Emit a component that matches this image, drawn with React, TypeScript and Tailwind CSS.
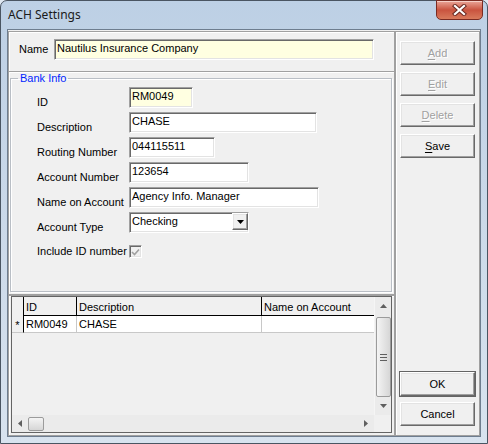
import React from 'react';

const sunken =
  'border border-t-[#a0a0a0] border-l-[#a0a0a0] border-r-white border-b-white shadow-[inset_1px_1px_0_#696969,inset_-1px_-1px_0_#e3e3e3]';
const raised =
  'border border-t-white border-l-white border-r-[#696969] border-b-[#696969] shadow-[inset_-1px_-1px_0_#a0a0a0,inset_1px_1px_0_#e3e3e3] bg-[#f0f0f0]';
const etched = 'border border-[#a0a0a0] shadow-[inset_1px_1px_0_#fff]';

const fields = [
  { label: 'ID', value: 'RM0049', cls: 'w-[64px] bg-[#ffffe1]' },
  { label: 'Description', value: 'CHASE', cls: 'w-[188px] bg-white' },
  { label: 'Routing Number', value: '044115511', cls: 'w-[86px] bg-white' },
  { label: 'Account Number', value: '123654', cls: 'w-[120px] bg-white' },
  { label: 'Name on Account', value: 'Agency Info. Manager', cls: 'w-[190px] bg-white' },
];

// ul = index of the accelerator letter, or -1 for none
function Btn({ label, ul, disabled, def }: { label: string; ul: number; disabled?: boolean; def?: boolean }) {
  return (
    <div
      className={`${raised} h-[24px] w-[75px] flex items-center justify-center text-[11px] ${
        disabled ? 'text-[#a0a0a0] [text-shadow:1px_1px_0_#fff]' : 'text-black'
      } ${def ? 'outline outline-1 outline-[#646464]' : ''}`}
    >
      {ul < 0 ? (
        <span>{label}</span>
      ) : (
        <span>
          {label.slice(0, ul)}
          <span className="underline underline-offset-2">{label.charAt(ul)}</span>
          {label.slice(ul + 1)}
        </span>
      )}
    </div>
  );
}

function Tri({ dir }: { dir: 'up' | 'down' | 'left' | 'right' }) {
  const pts = {
    up: '0,4 7,4 3.5,0',
    down: '0,0 7,0 3.5,4',
    left: '4,0 4,7 0,3.5',
    right: '0,0 0,7 4,3.5',
  }[dir];
  const horiz = dir === 'up' || dir === 'down';
  return (
    <svg width={horiz ? 7 : 4} height={horiz ? 4 : 7} viewBox={horiz ? '0 0 7 4' : '0 0 4 7'}>
      <polygon points={pts} fill="#5f5f5f" />
    </svg>
  );
}

export default function App() {
  return (
    <div className="w-[488px] h-[444px] bg-[#dfe8f2] font-['Liberation_Sans',Arial,sans-serif] text-black">
      <div className="w-[488px] h-[444px] rounded-t-[7px] border border-[#4a5562] bg-linear-to-b from-[#bdd0e5] via-[#cbd9e9] to-[#d8e3ef] flex flex-col">
        {/* title bar */}
        <div className="h-[28px] flex items-start justify-between">
          <div className="pl-[7px] pt-[6px] text-[12px] leading-[16px] text-[#1a1a1a] font-['Noto_Sans','Liberation_Sans',sans-serif]">
            ACH Settings
          </div>
          <div className="mr-[4px] -mt-[1px] w-[47px] h-[20px] rounded-b-[5px] border border-[#7a2b22] bg-linear-to-b from-[#e9a598] via-[#c9533f] to-[#d87a5c] shadow-[inset_0_1px_0_#f6cfc6] flex items-center justify-center">
            <svg width="15" height="12" viewBox="0 0 15 12">
              <path d="M3 2 L12 10 M12 2 L3 10" stroke="#6b2a22" strokeWidth="4.2" strokeLinecap="square" />
              <path d="M3 2 L12 10 M12 2 L3 10" stroke="#ffffff" strokeWidth="2.2" strokeLinecap="square" />
            </svg>
          </div>
        </div>

        {/* client */}
        <div className="mx-[6px] mb-[6px] h-[408px] border border-[#6e7d8f] bg-[#f0f0f0] flex text-[11px] leading-[13px]">
          {/* left column */}
          <div className="w-[387px] pt-[1px] flex flex-col">
            <div className={`${etched} h-[41px] flex items-start`}>
              <span className="pl-[10px] pt-[11px] w-[45px]">Name</span>
              <div className={`${sunken} mt-[7px] w-[320px] h-[21px] bg-[#ffffe1] pl-[2px] leading-[17px]`}>
                Nautilus Insurance Company
              </div>
            </div>

            <div className={`${etched} h-[223px] border-t-0 pl-[1px]`}>
              <fieldset className="w-[382px] h-[220px] border border-[#b9bec5] shadow-[inset_1px_1px_0_#fff,1px_1px_0_#fff] m-0 p-0">
                <legend className="ml-[7px] px-[2px] text-[#0026ff] leading-[13px]">Bank Info</legend>
                <div className="pl-[26px] pt-[2px] flex flex-col gap-[4px]">
                  {fields.map((f) => (
                    <div key={f.label} className="flex items-start h-[21px]">
                      <span className="w-[92px] pt-[9px]">{f.label}</span>
                      <div className={`${sunken} ${f.cls} h-[21px] pl-[2px] leading-[17px]`}>{f.value}</div>
                    </div>
                  ))}
                  <div className="flex items-start h-[21px]">
                    <span className="w-[92px] pt-[9px]">Account Type</span>
                    <div className={`${sunken} w-[120px] h-[21px] bg-white flex items-start justify-between`}>
                      <span className="pl-[2px] leading-[17px]">Checking</span>
                      <div className={`${raised} w-[16px] h-[17px] flex items-center justify-center`}>
                        <svg width="7" height="4" viewBox="0 0 7 4">
                          <polygon points="0,0 7,0 3.5,4" fill="#000" />
                        </svg>
                      </div>
                    </div>
                  </div>
                  <div className="flex items-center h-[13px] mt-[8px]">
                    <span className="w-[92px]">Include ID number</span>
                    <div className={`${sunken} w-[13px] h-[13px] bg-[#f0f0f0] flex items-center justify-center`}>
                      <svg width="9" height="8" viewBox="0 0 9 8">
                        <path d="M1 4 L3.5 6.5 L8 1.5" stroke="#a0a0a0" strokeWidth="1.6" fill="none" />
                      </svg>
                    </div>
                  </div>
                </div>
              </fieldset>
            </div>

            {/* grid panel */}
            <div className={`${etched} h-[141px] px-[2px] pb-[2px]`}>
              <div className="h-[137px] border border-[#646464] flex flex-col bg-[#f0f0f0]">
                <div className="flex h-[118px]">
                  <div className="flex-1 flex flex-col">
                    {/* header */}
                    <div className="flex h-[19px]">
                      <div className="w-[12px] border-r border-black" />
                      <div className="w-[53px] border-r border-b border-black pl-[2px] pt-[4px]">ID</div>
                      <div className="w-[185px] border-r border-b border-black pl-[2px] pt-[4px]">Description</div>
                      <div className="flex-1 border-b border-black pl-[2px] pt-[4px]">Name on Account</div>
                    </div>
                    {/* row */}
                    <div className="flex h-[17px]">
                      <div className="w-[12px] border-r border-b border-r-black border-b-[#c8c8c8] text-center leading-[18px]">*</div>
                      <div className="w-[53px] border-r border-b border-[#c8c8c8] bg-white pl-[2px] pt-[2px]">RM0049</div>
                      <div className="w-[185px] border-r border-b border-[#c8c8c8] bg-white pl-[2px] pt-[2px]">CHASE</div>
                      <div className="flex-1 border-b border-[#c8c8c8] bg-white" />
                    </div>
                  </div>
                  {/* vertical scrollbar */}
                  <div className="w-[17px] bg-[#ebebeb] border-l border-[#f5f5f5] flex flex-col items-center">
                    <div className="h-[17px] flex items-center justify-center">
                      <Tri dir="up" />
                    </div>
                    <div className="mt-[3px] w-[15px] h-[80px] rounded-[2px] border border-[#9b9b9b] bg-linear-to-r from-[#f4f4f4] to-[#d6d6d6] flex flex-col items-center justify-center gap-[2px]">
                      <div className="w-[7px] h-px bg-[#5f5f5f]" />
                      <div className="w-[7px] h-px bg-[#5f5f5f]" />
                      <div className="w-[7px] h-px bg-[#5f5f5f]" />
                    </div>
                    <div className="flex-1 flex items-center justify-center">
                      <Tri dir="down" />
                    </div>
                  </div>
                </div>
                {/* horizontal scrollbar */}
                <div className="flex h-[17px]">
                  <div className="flex-1 bg-[#ebebeb] flex items-center">
                    <div className="w-[16px] flex justify-center">
                      <Tri dir="left" />
                    </div>
                    <div className="w-[16px] h-[14px] rounded-[2px] border border-[#9b9b9b] bg-linear-to-b from-[#f4f4f4] to-[#d6d6d6]" />
                    <div className="flex-1" />
                    <div className="w-[16px] flex justify-center">
                      <Tri dir="right" />
                    </div>
                  </div>
                  <div className="w-[17px] bg-[#f0f0f0]" />
                </div>
              </div>
            </div>
          </div>

          {/* right column */}
          <div className="flex-1 pt-[1px]">
            <div className={`${etched} h-[405px] px-[4px] pt-[9px] pb-[9px] flex flex-col`}>
              <div className="flex flex-col gap-[7px]">
                <Btn label="Add" ul={0} disabled />
                <Btn label="Edit" ul={0} disabled />
                <Btn label="Delete" ul={0} disabled />
                <Btn label="Save" ul={0} />
              </div>
              <div className="flex-1" />
              <div className="flex flex-col gap-[6px]">
                <Btn label="OK" ul={-1} def />
                <Btn label="Cancel" ul={-1} />
              </div>
            </div>
          </div>
        </div>
      </div>
    </div>
  );
}
